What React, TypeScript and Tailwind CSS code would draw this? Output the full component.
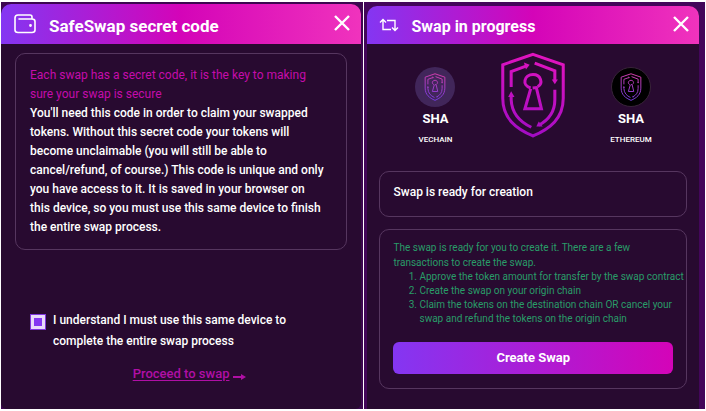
import { useState, type ReactNode } from "react";

function Shield({ id, className, from, to }: { id: string; className: string; from: string; to: string }) {
  return (
    <svg viewBox="34 22 190 256" className={className} fill="none" aria-hidden="true">
      <defs>
        <linearGradient id={id} gradientUnits="userSpaceOnUse" x1="160" y1="24" x2="110" y2="276">
          <stop offset="0" stopColor={from} />
          <stop offset="1" stopColor={to} />
        </linearGradient>
      </defs>
      <g stroke={`url(#${id})`} strokeWidth="9">
        <path d="M129 29 L219 60 V160 C219 220 180 250 129 272 C78 250 39 220 39 160 V60 Z" />
        <path d="M64 126 V80 L108 64" />
        <path d="M134 55 L194 78 V108" />
        <path d="M194 134 V164 C194 205 172 226 146 240" />
        <path d="M64 152 V164 C66 207 90 230 124 246" />
        <path d="M122 129 C94 121 103 89 129 89 C153 89 160 116 143 125" />
        <path d="M122 132 L105 191 H154 L139 128 L128 129" />
      </g>
      <g fill={`url(#${id})`}>
        <path d="M102 53 L119 60 L108 74 Z" />
        <path d="M185 104 H203 L194 118 Z" />
        <path d="M55 156 H74 L64 139 Z" />
        <path d="M139 244 L146 229 L158 244 Z" />
      </g>
    </svg>
  );
}

function WalletIcon() {
  return (
    <svg viewBox="0 0 22 20" className="h-5 w-[22px]" fill="none" stroke="currentColor" strokeWidth="1.6" strokeLinecap="round" aria-hidden="true">
      <path d="M18 5 V3 Q18 1 16 1 H4 Q1 1 1 4 V16 Q1 18.500 4 18.500 H18 Q21 18.500 21 16 V7.500 Q21 5 18 5 H5" />
      <circle cx="16.500" cy="11.500" r="0.600" fill="currentColor" />
    </svg>
  );
}

function SwapIcon() {
  return (
    <svg viewBox="0 0 20 14" className="h-3.5 w-5" fill="none" stroke="currentColor" strokeWidth="1.4" aria-hidden="true">
      <path d="M1 4.500 L4 1.500 L7 4.500 M4 2 V11.500 H12" />
      <path d="M13 9.500 L16 12.500 L19 9.500 M16 12 V2.500 H8" />
    </svg>
  );
}

function Header({ icon, title, className }: { icon: ReactNode; title: string; className: string }) {
  return (
    <header className={`flex items-center rounded-t-[10px] bg-linear-to-r/srgb from-[#8436f2] via-[#d404b8] to-[#f033bd] font-bold text-white ${className}`}>
      {icon}
      <h2 className="flex-1 pt-1 leading-5">{title}</h2>
      <button type="button" aria-label="Close" className="flex">
        <svg viewBox="0 0 16 16" className="mb-0.5 size-4" stroke="currentColor" strokeWidth="2.4" aria-hidden="true">
          <path d="M1 1 L15 15 M15 1 L1 15" />
        </svg>
      </button>
    </header>
  );
}

function Token({ id, chain, disc }: { id: string; chain: string; disc: string }) {
  return (
    <div className="flex w-20 flex-col items-center pt-[23px] text-white">
      <div className={`flex size-10 items-center justify-center rounded-full ${disc}`}>
        <Shield id={id} className="h-7 w-[22px]" from="#d83dab" to="#713be0" />
      </div>
      <strong className="mt-0.5 text-[13px] leading-5 font-bold">SHA</strong>
      <span className="mt-[3px] text-[8px] leading-4 font-medium">{chain}</span>
    </div>
  );
}

export default function App() {
  const [agreed, setAgreed] = useState(true);

  return (
    <main className="grid grid-cols-[363fr_341fr] gap-px bg-white px-px pt-0.5 pb-0.5 font-[Roboto,'Liberation_Sans',sans-serif]">
      <section className="flex flex-col bg-[#3c0750] pt-0.5 pr-0.5">
        <div className="flex flex-1 flex-col rounded-t-[10px] rounded-b-md bg-[#280a30]">
          <Header icon={<WalletIcon />} title="SafeSwap secret code" className="h-10 gap-[13px] pr-[11px] pl-[13px] text-[17px]" />
          <div className="mx-3.5 mt-[9px] rounded-[10px] border border-[#56365f] px-3.5 py-3 text-xs leading-[19px] font-medium text-white">
            <p className="font-normal text-[#c50cab]">
              Each swap has a secret code, it is the key to making
              <br />
              sure your swap is secure
            </p>
            <p>
              You'll need this code in order to claim your swapped
              <br />
              tokens. Without this secret code your tokens will
              <br />
              become unclaimable (you will still be able to
              <br />
              cancel/refund, of course.) This code is unique and only
              <br />
              you have access to it. It is saved in your browser on
              <br />
              this device, so you must use this same device to finish
              <br />
              the entire swap process.
            </p>
          </div>
          <label className="mt-[60px] ml-[30px] flex w-[270px] gap-2 text-xs leading-[21px] font-medium text-white">
            <input
              type="checkbox"
              checked={agreed}
              onChange={(e) => setAgreed(e.target.checked)}
              className="mt-[5px] size-3.5 shrink-0 appearance-none border-[3px] border-[#e8d9fa] bg-white outline outline-[#7f35dc] checked:bg-[#8436f2]"
            />
            <span>I understand I must use this same device to complete the entire swap process</span>
          </label>
          <a href="#swap" className="mt-3 mr-[115px] flex items-center gap-1 self-end text-[13px] leading-5 font-medium text-[#b00fa5]">
            <span className="underline underline-offset-2">Proceed to swap</span>
            <svg viewBox="0 0 13 8" className="mt-1.5 h-2 w-[13px]" aria-hidden="true">
              <path d="M0 3 H8 V1 L13 4 L8 7 V5 H0 Z" fill="currentColor" />
            </svg>
          </a>
        </div>
      </section>

      <section className="bg-[#43065a] pt-1 pr-1.5 pl-[3px]">
        <div className="flex h-full flex-col rounded-t-[10px] bg-[#280a30] pb-5">
          <Header icon={<SwapIcon />} title="Swap in progress" className="h-[38px] gap-3 pr-2.5 pl-3 text-base" />
          <div className="mx-7 flex justify-between">
            <Token id="vechain-shield" chain="VECHAIN" disc="bg-[#41265a]" />
            <Shield id="main-shield" className="mt-2 h-[86px] w-16" from="#e414bf" to="#a10cc4" />
            <Token id="ethereum-shield" chain="ETHEREUM" disc="border border-[#382339] bg-black" />
          </div>
          <div className="mx-3 mt-[23px] rounded-[10px] border border-[#56365f] px-[13px] pt-2.5 pb-[13px] text-xs leading-[21px] font-medium text-white">
            Swap is ready for creation
          </div>
          <div className="mx-3 mt-3 rounded-[10px] border border-[#56365f] px-[13px] pt-2.5 pb-3.5">
            <div className="-mr-3 text-[10px] leading-[15px] text-[#299c68]">
              <p>
                The swap is ready for you to create it. There are a few
                <br />
                transactions to create the swap.
              </p>
              <ol className="list-decimal pl-[26px] leading-[14px]">
                <li>Approve the token amount for transfer by the swap contract</li>
                <li>Create the swap on your origin chain</li>
                <li>
                  Claim the tokens on the destination chain OR cancel your
                  <br />
                  swap and refund the tokens on the origin chain
                </li>
              </ol>
            </div>
            <button
              type="button"
              className="mt-4 h-8 w-full rounded-md bg-linear-to-r/srgb from-[#8436f2] to-[#d404b8] text-[13px] leading-5 font-bold text-white"
            >
              Create Swap
            </button>
          </div>
        </div>
      </section>
    </main>
  );
}
